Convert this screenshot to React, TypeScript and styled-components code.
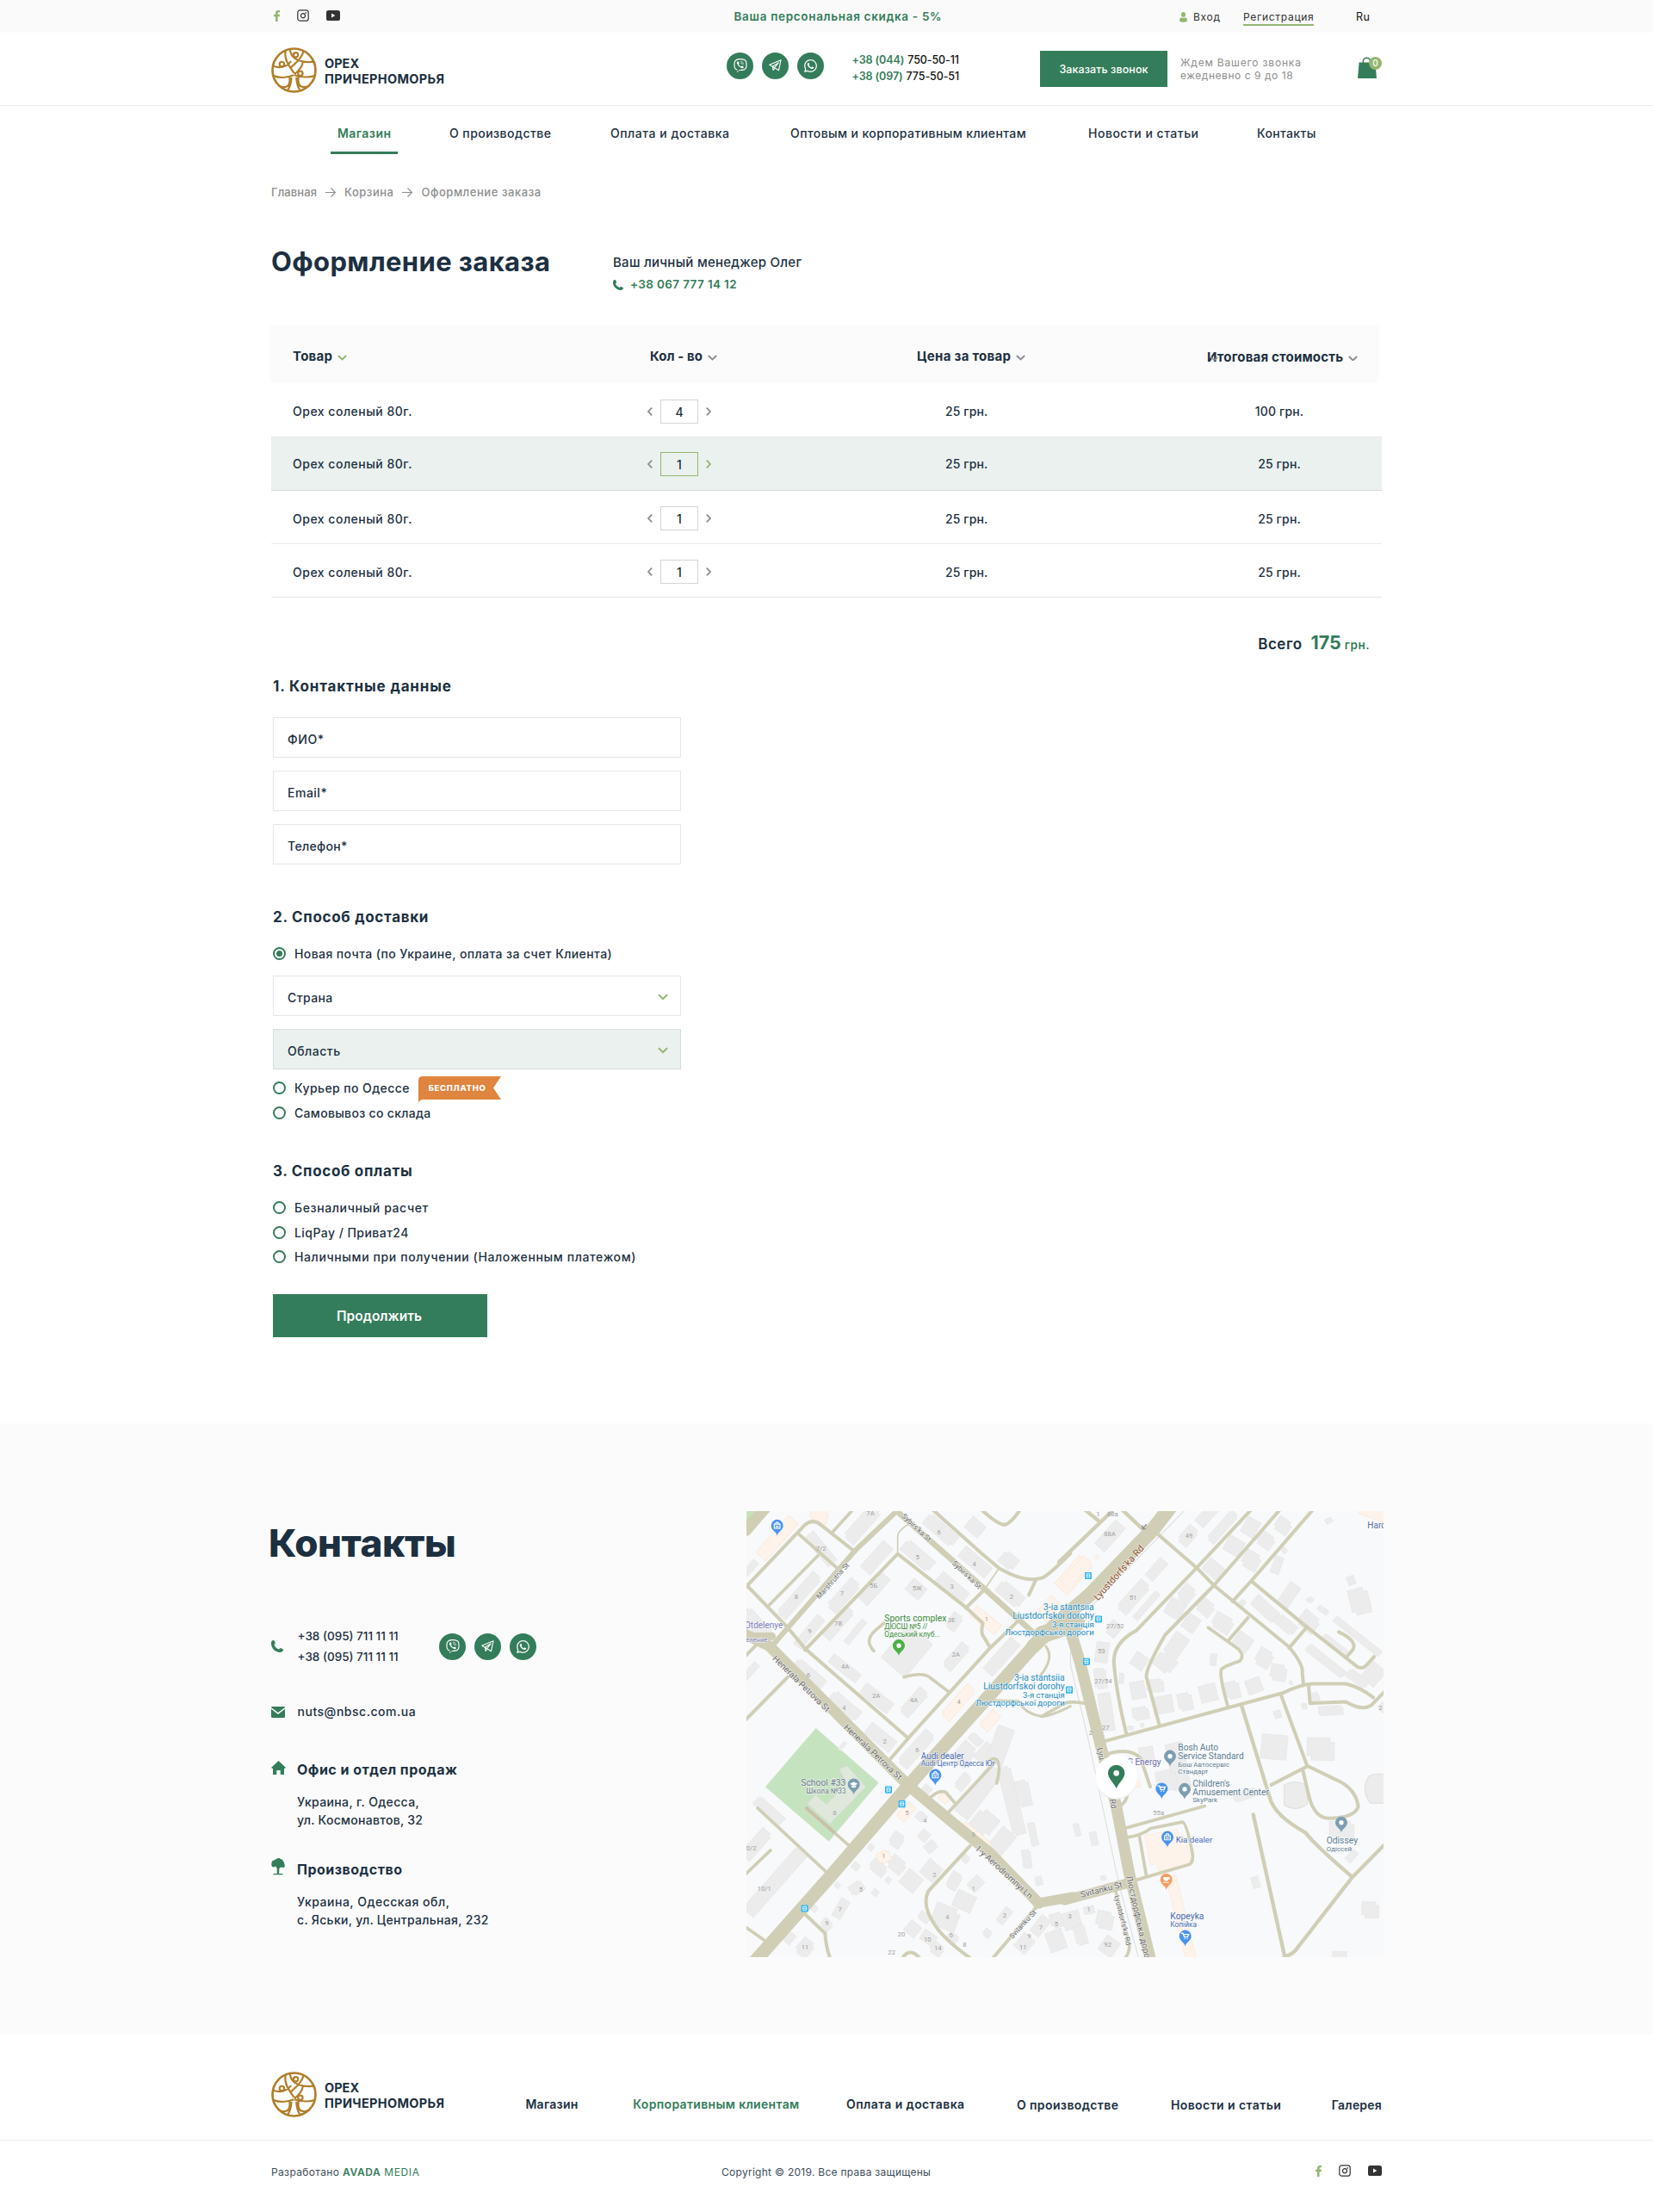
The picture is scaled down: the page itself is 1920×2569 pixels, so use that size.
import React from 'react';
import styled, { createGlobalStyle, css } from 'styled-components';
import { FaViber, FaWhatsapp } from 'react-icons/fa';

const green = '#347d5a';
const lime = '#94b670';
const ink = '#1c3041';
const grey = '#8e8e8e';

const GlobalStyle = createGlobalStyle`
  * { box-sizing: border-box; }
  body { margin: 0; background: #fff; color: ${ink}; font-family: Inter, "Open Sans", sans-serif; }
  h1, h2, h3, p { margin: 0; }
  svg { display: block; flex: none; }
`;

type Tracked = { $track?: number };
const tracking = css<Tracked>`
  letter-spacing: ${(p) => p.$track ?? 0}px;
  white-space: nowrap;
`;

const Page = styled.div`
  width: 1920px;
  height: 2569px;
  overflow: hidden;
`;
const Container = styled.div`
  width: 1290px;
  margin: 0 auto;
`;

/* ---------- top bar ---------- */
const TopBar = styled.div`
  height: 38px;
  background: #fafafa;
`;
const TopBarInner = styled(Container)`
  display: grid;
  grid-template-columns: 537.5px 517.5px 74px 131px auto;
`;
const Socials = styled.div<{ $top: number; $left: number }>`
  display: flex;
  align-items: center;
  height: 14px;
  margin-top: ${(p) => p.$top}px;
  margin-left: ${(p) => p.$left}px;
  gap: 20px;
`;
const Discount = styled.p<Tracked>`
  ${tracking}
  color: ${green};
  font-size: 13.5px;
  font-weight: 600;
  line-height: 39px;
`;
const Login = styled.a<Tracked>`
  ${tracking}
  display: flex;
  align-items: center;
  gap: 7px;
  height: 39px;
  font-size: 12px;
  color: #333;
`;
const Register = styled.a<Tracked>`
  ${tracking}
  justify-self: start;
  align-self: start;
  margin-top: 12px;
  font-size: 12px;
  line-height: 16px;
  color: #333;
  border-bottom: 2px solid ${lime};
`;
const Language = styled.span<Tracked>`
  ${tracking}
  font-size: 12.5px;
  font-weight: 400;
  line-height: 39px;
  color: #111;
`;

/* ---------- header ---------- */
const Header = styled.header`
  height: 85px;
  border-bottom: 1px solid #ececec;
`;
const HeaderInner = styled(Container)`
  display: grid;
  grid-template-columns: 529px 145.5px 218.5px 163px 206px auto;
  align-items: center;
  height: 84px;
`;
const LogoBox = styled.a`
  display: flex;
  align-items: center;
  gap: 9px;
  margin-top: 3px;
`;
const LogoText = styled.div`
  padding-top: 3px;
  font-size: 14.5px;
  font-weight: 700;
  line-height: 18.5px;
`;
const LogoLine = styled.div<Tracked>`
  ${tracking}
`;
const Messengers = styled.div<{ $lift?: number }>`
  display: flex;
  gap: 10px;
  margin-bottom: ${(p) => p.$lift ?? 0}px;
`;
const RoundButton = styled.button`
  display: flex;
  align-items: center;
  justify-content: center;
  width: 31px;
  height: 31px;
  padding: 0;
  border: 0;
  border-radius: 50%;
  background: ${green};
  color: #fff;
`;
const Phones = styled.div`
  margin-bottom: 2px;
  font-size: 12.5px;
  font-weight: 500;
  line-height: 19px;
  color: #111;
`;
const PhoneLine = styled.div`
  display: flex;
  gap: 4px;
  white-space: nowrap;
  letter-spacing: -0.1px;
`;
const PhoneCode = styled.span`
  color: ${green};
  font-weight: 600;
`;
const CallButton = styled.button<Tracked>`
  ${tracking}
  width: 148px;
  height: 42px;
  padding: 0;
  border: 0;
  background: ${green};
  color: #fff;
  font: 500 12.5px Inter, sans-serif;
`;
const Hours = styled.div`
  font-size: 12px;
  line-height: 15px;
  color: ${grey};
`;
const HoursLine = styled.div<Tracked>`
  ${tracking}
`;
const CartButton = styled.a`
  position: relative;
  width: 22px;
  height: 25px;
  margin-bottom: 4px;
`;
const CartBadge = styled.span`
  position: absolute;
  left: 13px;
  top: 0;
  width: 15px;
  height: 15px;
  border-radius: 50%;
  background: ${lime};
  color: #fff;
  font-size: 10px;
  font-weight: 500;
  line-height: 15px;
  text-align: center;
`;

/* ---------- navigation ---------- */
const MainNav = styled.nav`
  display: flex;
  padding-left: 69px;
`;
const NavLink = styled.a<Tracked & { $active?: boolean; $gap: number }>`
  ${tracking}
  margin-left: ${(p) => p.$gap}px;
  padding: 22px 8px 11px;
  border-bottom: 3px solid ${(p) => (p.$active ? green : 'transparent')};
  color: ${(p) => (p.$active ? green : ink)};
  font-size: 14px;
  font-weight: ${(p) => (p.$active ? 600 : 500)};
  line-height: 20px;
`;
const Breadcrumbs = styled.div`
  display: flex;
  align-items: center;
  gap: 10px;
  margin-top: 34px;
  height: 20px;
  color: ${grey};
  font-size: 13px;
  font-weight: 500;
`;
const Crumb = styled.span<Tracked>`
  ${tracking}
`;

/* ---------- title ---------- */
const TitleRow = styled.div`
  display: grid;
  grid-template-columns: 397px auto;
  height: 60px;
  margin-top: 50px;
`;
const PageTitle = styled.h1<Tracked>`
  ${tracking}
  padding-top: 1px;
  font-size: 31px;
  font-weight: 700;
  line-height: 40px;
`;
const Manager = styled.div`
  padding-top: 9px;
  line-height: 25px;
`;
const ManagerName = styled.p<Tracked>`
  ${tracking}
  font-size: 15px;
  font-weight: 500;
`;
const ManagerPhone = styled.p<Tracked>`
  ${tracking}
  display: flex;
  align-items: center;
  gap: 8px;
  margin-top: 1px;
  font-size: 13.5px;
  font-weight: 600;
  color: ${green};
`;

/* ---------- order table ---------- */
const TableHead = styled.div`
  display: grid;
  grid-template-columns: 415px 310px 337px auto;
  align-items: center;
  width: 1289px;
  height: 68px;
  margin: 34px 0 0 -2px;
  padding: 5px 0 0 27px;
  border-radius: 4px;
  background: #fbfbfb;
`;
const HeadCell = styled.div<Tracked & { $drop?: number }>`
  ${tracking}
  position: relative;
  display: flex;
  align-items: center;
  gap: 6px;
  padding-top: ${(p) => p.$drop ?? 0}px;
  font-size: 15px;
  font-weight: 700;
`;
const StrayMark = styled.span`
  position: absolute;
  left: 4px;
  top: 10px;
`;
const SortMark = styled.span`
  padding-top: 4px;
`;
const Row = styled.div<{ $active?: boolean; $height: number }>`
  display: grid;
  grid-template-columns: 412px 346px 358px 60px;
  align-items: center;
  height: ${(p) => p.$height}px;
  padding: ${(p) => (p.$active ? 0 : 3)}px 0 0 25px;
  border-bottom: 1px solid ${(p) => (p.$active ? '#d5dcd9' : '#e6e8e8')};
  background: ${(p) => (p.$active ? '#eaf1ee' : '#fff')};
  font-size: 14px;
  font-weight: 500;
`;
const Cell = styled.div<Tracked & { $center?: boolean }>`
  ${tracking}
  text-align: ${(p) => (p.$center ? 'center' : 'left')};
`;
const Quantity = styled.div`
  display: flex;
  align-items: center;
  gap: 9px;
`;
const QuantityBox = styled.div<{ $active?: boolean }>`
  width: 44px;
  height: 28px;
  border: 1px solid ${(p) => (p.$active ? lime : '#d5d5d5')};
  background: ${(p) => (p.$active ? 'transparent' : '#fff')};
  line-height: 27px;
  text-align: center;
`;
const Total = styled.div`
  display: flex;
  align-items: baseline;
  justify-content: flex-end;
  height: 24px;
  margin-top: 40px;
  padding-right: 14px;
  line-height: 24px;
  color: ${green};
`;
const TotalLabel = styled.span`
  margin-right: 10px;
  color: ${ink};
  font-size: 17px;
  font-weight: 600;
  letter-spacing: 0.5px;
`;
const TotalValue = styled.span`
  margin-right: 4px;
  font-size: 21.5px;
  font-weight: 700;
`;
const TotalUnit = styled.span`
  font-size: 13.5px;
  font-weight: 600;
  letter-spacing: 0.5px;
`;

/* ---------- form ---------- */
const Form = styled.form`
  width: 474px;
  margin: 29px 0 100px 2px;
`;
const StepTitle = styled.h3<Tracked & { $top?: number }>`
  ${tracking}
  margin-top: ${(p) => p.$top ?? 0}px;
  font-size: 17px;
  font-weight: 700;
  line-height: 20px;
`;
const FieldStack = styled.div<{ $top: number }>`
  display: flex;
  flex-direction: column;
  gap: 15px;
  margin-top: ${(p) => p.$top}px;
`;
const Field = styled.div<Tracked & { $active?: boolean }>`
  ${tracking}
  display: flex;
  align-items: center;
  justify-content: space-between;
  height: 47px;
  padding: 3px 14px 0 16px;
  border: 1px solid ${(p) => (p.$active ? '#d6dcd9' : '#e6e6e6')};
  background: ${(p) => (p.$active ? '#eaf1ee' : '#fff')};
  font-size: 14px;
  font-weight: 500;
`;
const Option = styled.label<Tracked & { $top: number }>`
  ${tracking}
  display: flex;
  align-items: center;
  height: 15px;
  margin-top: ${(p) => p.$top}px;
  font-size: 14px;
  font-weight: 500;
`;
const Radio = styled.span<{ $checked?: boolean }>`
  display: flex;
  align-items: center;
  justify-content: center;
  flex: none;
  width: 15px;
  height: 15px;
  margin-right: 10px;
  border: 2px solid ${green};
  border-radius: 50%;
  background: #fff;
  &::after {
    content: '';
    width: 7px;
    height: 7px;
    border-radius: 50%;
    background: ${(p) => (p.$checked ? green : 'transparent')};
  }
`;
const FreeTag = styled.span`
  position: relative;
  width: 96px;
  height: 27px;
  margin-left: 10px;
  padding-left: 12px;
  color: #fff;
  font-size: 9.5px;
  font-weight: 800;
  letter-spacing: 0.68px;
  line-height: 28px;
  & > svg { position: absolute; left: 0; top: 0; }
  & > b { position: relative; font-weight: inherit; }
`;
const Submit = styled.button`
  width: 249px;
  height: 50px;
  margin-top: 36px;
  padding: 0 2px 0 0;
  border: 0;
  background: ${green};
  color: #fff;
  font: 600 15.5px Inter, sans-serif;
`;

/* ---------- contacts ---------- */
const Contacts = styled.section`
  height: 710px;
  background: #fbfbfb;
`;
const ContactsInner = styled(Container)`
  display: grid;
  grid-template-columns: 552px 740px;
  align-items: start;
`;
const ContactsTitle = styled.h2`
  margin: 114px 0 0 -3px;
  font-size: 44px;
  font-weight: 800;
  letter-spacing: -0.45px;
  line-height: 50px;
`;
const ContactRow = styled.div<{ $top: number }>`
  display: grid;
  grid-template-columns: 30.5px 164.5px auto;
  align-items: center;
  margin-top: ${(p) => p.$top}px;
`;
const ContactPhones = styled.div`
  font-size: 13.5px;
  font-weight: 500;
  line-height: 24px;
`;
const ContactLine = styled.div<Tracked>`
  ${tracking}
  font-size: 14px;
  font-weight: 500;
  line-height: 20px;
`;
const PlaceHead = styled.div<{ $top: number }>`
  display: grid;
  grid-template-columns: 30px auto;
  align-items: start;
  height: 20px;
  margin-top: ${(p) => p.$top}px;
`;
const PlaceIcon = styled.span<{ $lift?: number }>`
  margin-top: ${(p) => -(p.$lift ?? 0)}px;
`;
const PlaceTitle = styled.h3`
  font-size: 16px;
  font-weight: 700;
  letter-spacing: 0.49px;
  line-height: 20px;
`;
const Address = styled.div`
  margin: 17px 0 0 30px;
  font-size: 14px;
  font-weight: 500;
  line-height: 21px;
`;
const AddressLine = styled.div<Tracked>`
  ${tracking}
`;
const MapFrame = styled.div`
  width: 740px;
  height: 518px;
  margin-top: 102px;
  overflow: hidden;
`;

/* ---------- footer ---------- */
const FooterTop = styled(Container)`
  display: flex;
  height: 122px;
  padding-top: 40px;
  align-items: flex-start;
`;
const FooterNav = styled.nav`
  display: flex;
  margin-left: auto;
  padding-top: 31px;
`;
const FooterLink = styled.a<Tracked & { $active?: boolean; $gap: number; $drop?: number }>`
  ${tracking}
  margin-left: ${(p) => p.$gap}px;
  padding-top: ${(p) => p.$drop ?? 0}px;
  color: ${(p) => (p.$active ? green : ink)};
  font-size: 14px;
  font-weight: 600;
  line-height: 20px;
`;
const FooterBottom = styled.div`
  border-top: 1px solid #e6e8e8;
`;
const FooterBottomInner = styled(Container)`
  display: grid;
  grid-template-columns: 523px 690px auto;
`;
const FinePrint = styled.div<Tracked>`
  ${tracking}
  margin-top: 26px;
  font-size: 12px;
  line-height: 21px;
  color: #3d4d5b;
`;
const Studio = styled.span`
  color: ${green};
  letter-spacing: 0.6px;
  & > b { font-weight: 600; }
`;

/* ---------- icons ---------- */
const Chevron = ({ color = grey, w = 11 }: { color?: string; w?: number }) => (
  <svg width={w} height={w * 0.62} viewBox="0 0 13 8" fill="none" stroke={color} strokeWidth="2.2">
    <path d="M1 1.2 6.5 6.5 12 1.2" />
  </svg>
);
const Step = ({ dir, color = grey }: { dir: 'l' | 'r'; color?: string }) => (
  <svg width="6" height="10" viewBox="0 0 6 10" fill="none" stroke={color} strokeWidth="1.8">
    <path d={dir === 'l' ? 'M5.2.6 1 5l4.2 4.4' : 'M.8.6 5 5 .8 9.4'} />
  </svg>
);
const ArrowIcon = () => (
  <svg width="12" height="12" viewBox="0 0 12 12" fill="none" stroke={grey} strokeWidth="1.2">
    <path d="M0 6.5h11M6.5 1.5l5 5-5 5" />
  </svg>
);
const PhoneIcon = ({ size }: { size: number }) => (
  <svg width={size} height={size} viewBox="0 0 14 14" fill={green}>
    <path d="M1 .6C1.900-.1 3-.1 3.600.6 4.300 1.500 4.700 2.600 4.700 3.600c0 .7-.9 1-1.300 1.500C4.200 7.800 6.400 9.900 9.100 10.500c.5-.5.8-1.200 1.500-1.200 1.100 0 2.200.5 3 1.200.6.6.5 1.500-.1 2.100-.9 1-2.100 1.400-3.300 1.400C4.400 13.600.3 9.300 0 3.900 0 2.600.2 1.400 1 .6z" />
  </svg>
);
const FacebookIcon = () => (
  <svg width="7" height="13" viewBox="0 0 7 13" fill={lime}>
    <path d="M2 13V7.200H0V4.800h2V3.200C2 1.100 3.200 0 5 0h2v2.300H5.700c-.8 0-1.100.4-1.100 1.200v1.300H7L6.700 7.200H4.600V13z" />
  </svg>
);
const InstagramIcon = () => (
  <svg width="14" height="14" viewBox="0 0 14 14" fill="none" stroke="#333" strokeWidth="1.2">
    <rect x=".8" y=".8" width="12.400" height="12.400" rx="2.800" />
    <circle cx="7" cy="7.200" r="2.500" />
    <circle cx="10.300" cy="3.800" r=".3" />
  </svg>
);
const YoutubeIcon = () => (
  <svg width="16" height="12" viewBox="0 0 16 12">
    <rect width="16" height="12" rx="2.600" fill="#333" />
    <path d="M6 3.600v4.800L10.400 6z" fill="#fff" />
  </svg>
);
const UserIcon = () => (
  <svg width="9" height="12" viewBox="0 0 9 12" fill={lime}>
    <ellipse cx="4.500" cy="3" rx="2.500" ry="3" />
    <path d="M1.800 6.300C3 7.200 6 7.200 7.200 6.300 8.400 7 9 8.300 9 10c0 2.400-9 2.400-9 0 0-1.700.6-3 1.800-3.700z" />
  </svg>
);
const PlaneIcon = () => (
  <svg width="15" height="14" viewBox="0 0 16 15" fill="none" stroke="#fff" strokeWidth="1.200" strokeLinejoin="round">
    <path d="M15 .8.800 6.800 4.600 8.800 12.300 13.600zM4.600 8.800 12 4.200 7.200 10.200M4.600 8.800 5.400 13.200 7.400 10.800" />
  </svg>
);
const BagIcon = () => (
  <svg width="22" height="25" viewBox="0 0 22 25">
    <path d="M1.600 6.500h18.800L22 25H0z" fill={green} />
    <path d="M6.200 9V6C6.200-.4 14.800-.4 14.800 6v3" fill="none" stroke={green} strokeWidth="1.500" />
  </svg>
);
const MailIcon = () => (
  <svg width="16" height="13" viewBox="0 0 16 13" fill={green}>
    <path d="M1.200 0h13.600c.7 0 1.200.5 1.200 1L8 7 0 1c0-.5.5-1 1.200-1zM0 2.800 8 9l8-6.200v9c0 .7-.5 1.200-1.200 1.200H1.200C.5 13 0 12.500 0 11.800z" />
  </svg>
);
const HomeIcon = () => (
  <svg width="17" height="16" viewBox="0 0 17 16" fill={green}>
    <path d="M8.500 0 17 8l-1 .8h-1V16h-4.300v-5H6.300v5H2V8.800H1L0 8z" />
  </svg>
);
const TreeIcon = () => (
  <svg width="16" height="20" viewBox="0 0 16 20" fill={green}>
    <path d="M6 1.200C7.600-.6 10-.2 10.800 1.200c1.800-.2 3 1 3 2.600 1.300.7 1.500 2 1.400 3 1.200 1.700.6 4-1.200 4.200-1.200.2-2-.3-2.400-.8L9.400 12l-.3 6h4.400v1.200h-11V18h4.400l-.2-6-1.600-2.400C4 10.500 2 11 .9 9.400 0 8 .2 6.700.5 5.800.6 3.500 2 2.400 3.700 2.600 4.200 1.700 5 1.200 6 1.200z" />
  </svg>
);
const Emblem = () => (
  <svg width="53" height="53" viewBox="14 168 158 158" fill="none" stroke="#b07f2b" strokeWidth="6.500">
    <circle cx="93" cy="247" r="74.500" strokeWidth="8" />
    <path d="M63 178c-3 30 6 46 31 80M79 177c3 18 12 29 27 34M126 179c-2 14-10 26-22 38l-21 20M103 212c20 6 42 9 61 5M21 233c24 8 46 3 62-17M124 217c-2 18-14 32-29 44M20 266c24 9 49 8 72-2M94 264c24 8 50 9 73 2M78 270c2 26-5 34-14 35-10 1-18-1-24-4M108 270c-2 26 5 34 14 35 10 1 18-1 24-4M84 272c-1 16-3 30-12 44M101 272c1 16 3 30 12 44" />
    <circle cx="99" cy="194" r="8" />
    <circle cx="51" cy="226" r="8" />
    <circle cx="115" cy="258" r="8" />
  </svg>
);

const Logo = () => (
  <LogoBox>
    <Emblem />
    <LogoText>
      <LogoLine>ОРЕХ</LogoLine>
      <LogoLine $track={0.34}>ПРИЧЕРНОМОРЬЯ</LogoLine>
    </LogoText>
  </LogoBox>
);
const MessengerButtons = ({ lift }: { lift?: number }) => (
  <Messengers $lift={lift}>
    <RoundButton><FaViber size={16} /></RoundButton>
    <RoundButton><PlaneIcon /></RoundButton>
    <RoundButton><FaWhatsapp size={17} /></RoundButton>
  </Messengers>
);
const SocialIcons = ({ top, left }: { top: number; left: number }) => (
  <Socials $top={top} $left={left}>
    <FacebookIcon />
    <InstagramIcon />
    <YoutubeIcon />
  </Socials>
);

/* ---------- map ---------- */
type Road = [d: string, width: number];
const roadsWest: Road[] = [
  ['M20 80 90 0', 40],
  ['M25 1590 320 1262 588 955 1030 470', 46],
  ['M0 430 100 478 340 715 588 960 740 1085 870 1190 1040 1362', 38],
  ['M0 445H110', 26],
  ['M1035 1362 1160 1340', 34],
  ['M100 490 400 150 550 10', 18],
  ['M15 280 225 62Q252 40 280 62L400 155', 12],
  ['M20 268 165 415 225 487 585 795', 12],
  ['M225 492 548 162 785 345 845 400Q835 435 850 450L870 483', 12],
  ['M515 875 585 795 870 485 975 385', 12],
  ['M545 15 860 290 1040 450', 20],
  ['M670 10 840 160 900 210Q990 262 1050 245 1075 235 1150 160', 12],
  ['M1005 303 1030 250', 12],
  ['M785 348 850 285', 12],
  ['M850 285 902 210M548 160V100Q550 80 590 58', 5],
  ['M840 10Q895 60 920 62 940 60 975 10', 12],
  ['M320 88 392 10M205 95 350 222M100 338 270 168', 11],
  ['M15 735 165 585M10 520 60 470', 12],
  ['M465 495Q430 460 470 425L500 400M570 585Q640 565 665 590L725 635', 11],
  ['M1065 480Q1095 520 1045 580', 9],
  ['M880 665 970 668Q990 710 1050 720 1080 720 1150 685', 9],
  ['M720 1055 885 880M860 880Q875 860 892 868 910 885 893 950M655 1005Q690 970 715 980L745 1015', 11],
  ['M800 1165 655 1320Q630 1370 680 1440 710 1485 800 1550', 12],
  ['M1040 1365 880 1550', 12],
  ['M230 1035 380 1165M60 1035 300 1255M15 1265 105 1180M20 1445 85 1490', 11],
  ['M220 1395 295 1465Q298 1510 312 1550M565 1550Q590 1512 625 1550', 12],
];
const roadsEast: Road[] = [
  ['M-90 480 10 385 110 300 330 75 385 5', 50],
  ['M-60 440 60 400', 60],
  ['M35 410 75 540 130 760 200 1030 245 1260 320 1560', 40],
  ['M20 1352 250 1290', 34],
  ['M0 190 185 15M90 10 140 50M220 10 290 75', 13],
  ['M340 90 480 210 540 270 800 480Q852 540 848 570L852 610', 12],
  ['M670 10 480 210 270 425Q185 470 192 540 200 640 235 780', 12],
  ['M770 10 540 270 370 440Q300 560 305 585L350 750', 12],
  ['M885 10 670 255 605 325', 12],
  ['M670 255 860 410 1040 550Q1060 560 1075 540L1098 515M865 412 802 485M658 382 590 460', 12],
  ['M520 415 620 485Q650 510 630 530 570 550 565 560 560 590 590 690', 11],
  ['M160 805 590 690 780 640Q850 605 900 608H1000Q1050 620 1095 655', 12],
  ['M870 615 875 675 1000 670Q1070 710 1100 670L1145 625', 12],
  ['M975 430Q1040 460 1025 490L1000 518', 12],
  ['M637 685 735 1000Q750 1060 860 1120 890 1160 1020 1270', 13],
  ['M775 650 865 890 960 935Q1035 965 1043 1030 1030 1070 940 1070 890 1070 870 990L850 905M740 955 865 892', 12],
  ['M1145 1150 1020 1275 835 1510Q820 1535 790 1545M677 1057 790 1560', 13],
  ['M165 850Q250 825 285 865L318 962', 12],
  ['M235 1103 508 1028M242 1135Q285 1130 320 1105L430 1083Q445 1085 465 1190 470 1225 450 1230L270 1282M280 1130 305 1270', 11],
  ['M210 1028Q240 1015 240 970M-60 720 20 675Q45 668 88 675', 11],
  ['M195 1310 245 1500Q248 1540 220 1560', 11],
];
type Block = [cx: number, cy: number, w: number, h: number, angle: number];
const blocksWest: Block[] = [
  [280, 145, 40, 130, -40], [205, 305, 42, 190, 42], [240, 430, 34, 130, 40], [425, 60, 50, 150, 42],
  [475, 175, 46, 120, 42], [360, 305, 46, 130, 42], [465, 280, 48, 120, 42], [340, 400, 40, 130, 42],
  [400, 430, 22, 100, 40], [698, 80, 48, 130, -50], [818, 190, 46, 120, -50], [618, 168, 48, 125, -50],
  [738, 278, 48, 120, -50], [940, 300, 50, 100, -50], [818, 70, 50, 60, -50], [935, 185, 50, 60, -50],
  [612, 283, 60, 50, 40], [745, 395, 40, 60, 35], [580, 495, 110, 150, 40], [752, 515, 40, 105, 42],
  [910, 515, 45, 145, 42], [240, 575, 44, 125, -50], [363, 555, 36, 120, -52], [363, 685, 46, 120, -50],
  [475, 658, 44, 120, -52], [605, 672, 42, 110, 42], [488, 792, 48, 110, -52], [613, 832, 46, 150, 42],
  [355, 822, 12, 34, 40], [100, 1045, 38, 120, -48], [120, 1290, 50, 280, 42], [55, 1160, 44, 120, 42],
  [35, 210, 24, 60, 42], [60, 410, 50, 140, -42], [35, 565, 24, 70, 42], [780, 850, 60, 80, 42],
  [850, 845, 40, 70, 42], [820, 800, 30, 50, -48], [905, 820, 60, 130, 20], [945, 1010, 46, 240, -14],
  [830, 980, 60, 200, 38], [850, 1085, 80, 80, -50], [910, 1150, 60, 90, 40], [985, 985, 50, 90, -12],
  [1020, 1125, 24, 80, -12], [998, 1210, 30, 64, -8], [1040, 1285, 24, 30, -14], [775, 945, 36, 60, 40],
  [650, 970, 30, 26, 40], [545, 1145, 44, 50, 35], [640, 1130, 34, 36, 40], [630, 1065, 30, 36, -50],
  [663, 1168, 40, 34, -40], [545, 1230, 60, 50, 40], [595, 1285, 64, 60, 40], [480, 1240, 60, 40, 40],
  [665, 1250, 60, 60, 40], [745, 1285, 40, 60, 30], [820, 1295, 50, 40, -45], [715, 1410, 90, 80, 20],
  [780, 1355, 70, 60, 25], [640, 1410, 40, 30, 35], [600, 1450, 46, 46, 40], [405, 1310, 50, 40, -35],
  [402, 1235, 26, 24, 40], [455, 1170, 20, 22, 40], [350, 1380, 34, 70, 30], [300, 1435, 40, 34, 45],
  [172, 1482, 28, 40, 40], [225, 1515, 50, 60, 40], [920, 1405, 30, 60, 38], [860, 1465, 28, 28, 40],
  [655, 1480, 50, 40, 35], [685, 1520, 44, 40, 40], [1045, 1440, 40, 70, 40], [1105, 1420, 50, 50, -15],
  [990, 1500, 50, 60, 40], [785, 1210, 26, 26, 40], [470, 1325, 22, 22, 40], [515, 1283, 20, 20, 40],
  [1100, 1490, 60, 70, -20], [740, 1480, 40, 30, 40], [338, 1300, 18, 18, 40], [258, 1380, 22, 22, 40],
];
const blocksEast: Block[] = [
  [178, 100, 46, 110, 42], [450, 100, 44, 70, 42], [515, 30, 40, 80, 42], [570, 70, 34, 130, 42],
  [668, 70, 50, 60, 30], [780, 65, 56, 50, 35], [610, 135, 60, 56, 30], [720, 115, 60, 50, 35],
  [340, 215, 36, 80, 42], [260, 310, 46, 130, 42], [305, 340, 22, 120, 42], [190, 420, 44, 50, 40],
  [150, 500, 44, 70, 8], [145, 590, 42, 70, -6], [165, 705, 44, 130, -8], [445, 300, 50, 60, 40],
  [405, 350, 60, 60, 30], [510, 345, 60, 50, 40], [460, 400, 50, 56, 35], [570, 400, 70, 56, 30],
  [540, 215, 70, 50, 40], [670, 185, 60, 60, 30], [718, 350, 44, 100, -48], [790, 405, 40, 80, -50],
  [800, 305, 44, 90, 35], [870, 395, 70, 60, 40], [640, 465, 60, 56, 35], [715, 520, 56, 60, 30],
  [410, 475, 56, 80, 35], [370, 535, 60, 70, -50], [280, 530, 50, 50, 35], [765, 570, 56, 56, 10],
  [275, 630, 50, 60, -10], [335, 615, 60, 44, -5], [362, 680, 70, 60, -10], [440, 670, 50, 60, -12],
  [520, 640, 60, 60, -14], [605, 630, 50, 60, -14], [680, 615, 54, 50, -20], [285, 710, 56, 44, -10],
  [760, 200, 30, 60, 20], [1048, 325, 68, 90, -14], [1018, 253, 26, 30, -20], [960, 475, 26, 100, -52],
  [1040, 445, 24, 200, -52], [930, 530, 30, 160, -52], [1095, 575, 60, 70, 40], [1040, 590, 34, 80, -55],
  [890, 658, 34, 36, -20], [947, 700, 86, 32, -3], [750, 825, 90, 84, 5], [912, 832, 96, 78, 1],
  [415, 890, 60, 160, -12], [375, 940, 70, 70, -12],
  [305, 850, 50, 50, -8], [985, 1110, 86, 60, 0], [1020, 1200, 26, 44, 42], [650, 990, 84, 30, -18],
  [685, 1290, 26, 40, -16], [1085, 1385, 60, 56, 1], [978, 1538, 50, 22, 0], [63, 1110, 20, 44, -12],
  [122, 1140, 24, 46, -12], [155, 1275, 18, 16, -12], [45, 1420, 60, 60, -15], [160, 1420, 60, 60, 10],
  [175, 1510, 56, 60, 35], [75, 1470, 40, 70, -15], [105, 1385, 36, 26, -12], [855, 685, 18, 20, -12],
  [762, 713, 24, 26, -15], [808, 605, 12, 14, 0], [538, 525, 22, 40, 5], [218, 590, 16, 36, 5],
  [640, 330, 20, 20, 40], [940, 48, 24, 18, -30], [785, 150, 16, 20, -40], [875, 320, 20, 20, -40],
  [920, 355, 40, 18, 35], [250, 760, 20, 14, 0], [290, 750, 12, 14, 0], [1130, 690, 30, 30, 40],
];
const shopsWest: Block[] = [
  [128, 108, 44, 170, 42], [275, 30, 60, 50, 20], [855, 390, 40, 110, -52], [760, 672, 40, 140, 42],
  [870, 735, 38, 70, 42], [822, 1128, 26, 120, -50], [578, 1048, 36, 64, 42], [500, 1203, 44, 40, -30],
  [712, 998, 34, 34, 40], [1075, 350, 50, 80, 42], [1160, 235, 60, 130, 42],
];
const shopsEast: Block[] = [
  [60, 225, 40, 120, 42], [380, 1180, 140, 130, -10], [430, 1430, 36, 330, -14], [262, 950, 40, 30, -10],
  [1110, 20, 120, 50, 20], [132, 173, 14, 14, 40],
];
type Label = [text: string, x: number, y: number, size: number, color: string, anchor?: 'middle' | 'end', angle?: number];
const street = '#6b6b6b';
const metro = '#1d8fc4';
const poi = '#5f7f92';
const shop = '#4a6cb5';
const labelsWest: Label[] = [
  ['Sports complex', 502, 395, 31, '#3c8f3a'], ['ДЮСШ №5 //', 502, 421, 25, '#3c8f3a'], ['Одеський клуб...', 502, 446, 25, '#3c8f3a'],
  ['Otdelenye', 15, 416, 30, '#7d7fb8'], ['деление', 4, 465, 23, '#7d7fb8'],
  ['School #33', 211, 959, 31, '#647683'], ['Школа №33', 368, 985, 25, '#647683', 'end'],
  ['Audi dealer', 629, 866, 30, shop], ['Audi Центр Одесса Юг', 629, 890, 25, shop],
  ['3-ia stantsiia', 1232, 354, 31, metro, 'end'], ['Liustdorfskoi dorohy', 1232, 385, 31, metro, 'end'],
  ['3-я станція', 1232, 413, 28.5, metro, 'end'], ['Люстдорфської дороги', 1232, 441, 28.5, metro, 'end'],
  ['3-ia stantsiia', 1130, 597, 31, metro, 'end'], ['Liustdorfskoi dorohy', 1130, 628, 31, metro, 'end'],
  ['3-я станція', 1130, 656, 28.5, metro, 'end'], ['Люстдорфської дороги', 1130, 684, 28.5, metro, 'end'],
  ['Marshrutna St', 328, 260, 25, street, 'middle', -48], ["Sybirs'ka St", 608, 78, 25, street, 'middle', 43],
  ["Sybirs'ka St", 783, 240, 25, street, 'middle', 43], ['Henerala Petrova St', 205, 615, 30, street, 'middle', 44],
  ['Henerala Petrova St', 455, 850, 30, street, 'middle', 43], ['1-y Aerodromnyi Ln', 912, 1262, 30, street, 'middle', 42],
  ['Svitanku St', 990, 1440, 25, street, 'middle', -47],
];
const labelsEast: Label[] = [
  ["Lyustdorfs'ka Rd", 217, 234, 33, '#92542b', 'middle', -48], ['Lyu', 137, 850, 28, street, 'middle', 78],
  ['Rd', 180, 1022, 28, street, 'middle', 80], ['Svitanku St', 150, 1325, 30, street, 'middle', -14],
  ["Lyustdorfs'ka Rd", 214, 1422, 24, street, 'middle', 76], ['Люстдорфська дорога', 270, 1425, 30, street, 'middle', 77],
  ['Harc', 1075, 75, 30, '#5a6fa5'], ['S Energy', 240, 886, 30, '#7072b0'],
  ['Bosh Auto', 415, 838, 30.5, poi], ['Service Standard', 415, 868, 30.5, poi], ['Бош Автосервіс', 415, 894, 24, poi], ['Стандарт', 415, 918, 24, poi],
  ["Children's", 466, 962, 30.5, poi], ['Amusement Center', 466, 992, 31, poi], ['SkyPark', 466, 1016, 24, poi],
  ['Kia dealer', 407, 1154, 29, shop], ['Odissey', 932, 1157, 31, poi], ['Одіссей', 932, 1183, 24, poi],
  ['Kopeyka', 388, 1417, 31, shop], ['Копійка', 388, 1443, 25, shop],
];
type Num = [text: string, x: number, y: number];
const numbersWest: Num[] = [
  ['7A', 453, 30], ['7/2', 281, 150], ['8', 195, 317], ['7', 354, 305], ['5Б', 464, 278], ['9', 241, 434], ['7В', 341, 408],
  ['6', 692, 94], ['4', 815, 204], ['5', 617, 182], ['3', 737, 282], ['5Ж', 616, 288], ['2', 945, 317], ['3Е', 736, 397],
  ['1', 858, 395], ['2A', 751, 514], ['6', 237, 585], ['4A', 365, 556], ['4', 361, 697], ['2A', 473, 656], ['4A', 604, 671],
  ['4', 761, 678], ['2', 503, 813], ['6', 616, 843], ['8', 328, 1058], ['5', 580, 1060], ['4', 643, 1086], ['3', 812, 1132],
  ['0/2', 38, 1180], ['1', 499, 1208], ['2', 676, 1273], ['5', 420, 1322], ['1', 812, 1318], ['10/1', 83, 1320],
  ['7', 347, 1390], ['9', 301, 1437], ['4', 721, 1418], ['2', 921, 1412], ['20', 561, 1476], ['10', 652, 1494], ['6', 735, 1480],
  ['14', 688, 1522], ['8', 781, 1513], ['22', 527, 1539], ['11', 225, 1521], ['11', 985, 1521], ['7', 1047, 1453], ['5', 1101, 1440], ['9', 1006, 1483],
];
const numbersEast: Num[] = [
  ['1', 136, 33], ['88a', 187, 33], ['88A', 177, 102], ['49', 453, 106], ['51', 258, 319], ['27/52', 196, 417], ['53', 148, 504],
  ['27/54', 154, 607], ['27', 163, 767], ['2', 111, 784], ['55a', 347, 1058], ['3', 38, 1414], ['1', 104, 1390], ['92', 170, 1511], ['2', 1120, 699],
];
type PinSpec = [x: number, y: number, color: string, glyph: 'bag' | 'dot' | 'cap' | 'cart' | 'cup'];
const pinsWest: PinSpec[] = [[128, 65, '#4a94f0', 'bag'], [552, 477, '#4caf47', 'dot'], [395, 954, '#7d9db1', 'cap'], [679, 922, '#4a94f0', 'bag']];
const pinsEast: PinSpec[] = [
  [387, 857, '#7d9db1', 'dot'], [438, 970, '#7d9db1', 'dot'], [358, 969, '#4a94f0', 'cart'], [378, 1135, '#4a94f0', 'bag'],
  [374, 1281, '#f79a62', 'cup'], [440, 1475, '#4a94f0', 'cart'], [984, 1085, '#7d9db1', 'dot'],
];

const Roads = ({ items }: { items: Road[] }) => (
  <g fill="none" stroke="#d0cfb6" strokeLinecap="round" strokeLinejoin="round">
    {items.map(([d, w], i) => <path key={i} d={d} strokeWidth={w} />)}
  </g>
);
const Blocks = ({ items, fill = '#ececec', line = '#e3e3e3' }: { items: Block[]; fill?: string; line?: string }) => (
  <g fill={fill} stroke={line} strokeWidth="1.5">
    {items.map(([x, y, w, h, a], i) => {
      const n = Math.min(w, h) * 0.2;
      /* corners are notched on alternate blocks so that outlines stay irregular */
      const d = i % 2
        ? `M${-w / 2} ${-h / 2}H${w / 2 - n}V${-h / 2 + n}H${w / 2}V${h / 2}H${-w / 2 + n}V${h / 2 - n}H${-w / 2}Z`
        : `M${-w / 2} ${-h / 2}H${w / 2}V${h / 2}H${-w / 2}Z`;
      return <path key={i} d={d} transform={`translate(${x} ${y}) rotate(${a})`} />;
    })}
  </g>
);
const Labels = ({ items }: { items: Label[] }) => (
  <g fontFamily="Roboto, sans-serif" stroke="#f8f9fb" strokeWidth="4" strokeOpacity=".75" paintOrder="stroke">
    {items.map(([t, x, y, s, c, anchor, a], i) => (
      <text key={i} fontSize={s} fill={c} textAnchor={anchor} transform={`translate(${x} ${y}) rotate(${a ?? 0})`}>{t}</text>
    ))}
  </g>
);
const Numbers = ({ items }: { items: Num[] }) => (
  <g fontFamily="Roboto, sans-serif" fontSize="23" fill="#a0a0a0" textAnchor="middle">
    {items.map(([t, x, y], i) => <text key={i} x={x} y={y}>{t}</text>)}
  </g>
);
const glyphs = {
  bag: <path d="M-10-5H10V9H-10ZM-5-6C-5-14 5-14 5-6M-5 1Q0 6 5 1" fill="none" stroke="#fff" strokeWidth="3.5" />,
  dot: <circle r="8" fill="#fff" />,
  cap: <path d="M-14-2 0-9 14-2 0 5ZM-8 3V9Q0 13 8 9V3L0 7Z" fill="#fff" />,
  cart: <path d="M-13-10H-8L-3 3H8L12-6H-7M-2 9h.1M7 9h.1" fill="none" stroke="#fff" strokeWidth="4" strokeLinecap="round" />,
  cup: <path d="M-10-9H12V-1H7Q7 5 0 5T-10-2ZM-11 8H9V11H-11Z" fill="#fff" />,
};
const Pins = ({ items }: { items: PinSpec[] }) => (
  <g>
    {items.map(([x, y, c, g], i) => (
      <g key={i} transform={`translate(${x} ${y})`}>
        <path d="M0 35C-3 20-21 15-21 0A21 21 0 0 1 21 0C21 15 3 20 0 35Z" fill={c} />
        {glyphs[g]}
      </g>
    ))}
  </g>
);
const Stops = ({ items }: { items: [number, number][] }) => (
  <g>
    {items.map(([x, y], i) => (
      <g key={i} transform={`translate(${x} ${y})`}>
        <rect x="-12" y="-12" width="24" height="24" rx="3" fill="#2bb5f5" />
        <path d="M-6-7H6V5H-6ZM-6-1H6M-5 8h2M3 8h2" fill="none" stroke="#fff" strokeWidth="2.5" />
      </g>
    ))}
  </g>
);
const CityMap = () => (
  <svg width="740" height="518" viewBox="0 0 2220 1532" preserveAspectRatio="none">
    <rect width="2220" height="1532" fill="#f8f9fb" />
    <g transform="translate(-21 -15)">
      <path d="M263 760 482 948 308 1150 87 962Z" fill="#c6e3c0" />
      <path d="M20 15H85L20 75Z" fill="#c6e3c0" />
      <Blocks items={blocksWest} />
      <path d="M345 900 372 890 438 962 312 1090 233 1020 262 988 300 1022 370 950Z" fill="#dfe8db" stroke="#cfd9cb" strokeWidth="2" />
    </g>
    <g transform="translate(1089 -15)">
      <Blocks items={blocksEast} />
      <path d="M785 955Q825 935 866 958V1020Q830 1050 785 1025ZM1080 925Q1110 910 1145 925V1018H1085Q1050 970 1080 925Z" fill="#ececec" stroke="#dedede" strokeWidth="3" />
    </g>
    <g transform="translate(-21 -15)"><Blocks items={shopsWest} fill="#fdf3ea" line="#f9dcc2" /></g>
    <g transform="translate(1089 -15)"><Blocks items={shopsEast} fill="#fdf3ea" line="#f9e3d0" /></g>
    <g transform="translate(1089 -15)" fill="none" stroke="#dcdcdc" strokeWidth="3">
      <path d="M440 10 120 335 50 470Q35 500 42 550L100 790 210 1300 280 1560" />
    </g>
    <g transform="translate(-21 -15)"><Roads items={roadsWest} /></g>
    <g transform="translate(1089 -15)"><Roads items={roadsEast} /></g>
    <g transform="translate(-21 -15)">
      <path d="M230 1035 325 1117" stroke="#cbbfa8" strokeWidth="11" strokeLinecap="round" />
      <Numbers items={numbersWest} />
      <Labels items={labelsWest} />
      <Stops items={[[516, 972], [563, 1021], [224, 1380]]} />
      <Pins items={pinsWest} />
    </g>
    <g transform="translate(1089 -15)">
      <Numbers items={numbersEast} />
      <Labels items={labelsEast} />
      <path d="M305 60 293 74M291 64V76H303" fill="none" stroke="#8f8f8f" strokeWidth="4" />
      <Stops items={[[102, 237], [138, 386], [96, 532], [36, 629]]} />
      <Pins items={pinsEast} />
      <circle cx="200" cy="932" r="73" fill="#eff0f2" />
      <circle cx="200" cy="927" r="73" fill="#fff" />
      <path d="M200 968C192 948 171 935 171 915A29 28 0 0 1 229 915C229 935 208 948 200 968Z" fill={green} />
      <circle cx="200" cy="915" r="10" fill="#fff" />
    </g>
  </svg>
);

/* ---------- data ---------- */
const navItems = [
  { text: 'Магазин', track: 0.43, gap: 0, active: true },
  { text: 'О производстве', track: 0.47, gap: 51.5 },
  { text: 'Оплата и доставка', track: 0.53, gap: 52.5 },
  { text: 'Оптовым и корпоративным клиентам', track: 0.4, gap: 54.5 },
  { text: 'Новости и статьи', track: 0.49, gap: 56 },
  { text: 'Контакты', track: 0.35, gap: 51.5 },
];
const footerItems = [
  { text: 'Магазин', track: 0.26, gap: 0 },
  { text: 'Корпоративным клиентам', track: 0.33, gap: 63.5, active: true },
  { text: 'Оплата и доставка', track: 0.39, gap: 54.5 },
  { text: 'О производстве', track: 0.39, gap: 60.5, drop: 1 },
  { text: 'Новости и статьи', track: 0.42, gap: 60.5, drop: 1 },
  { text: 'Галерея', track: 0.21, gap: 58.5, drop: 1 },
];
const orderRows = [
  { qty: 4, sum: '100 грн.', height: 63 },
  { qty: 1, sum: '25 грн.', height: 62, active: true },
  { qty: 1, sum: '25 грн.', height: 62 },
  { qty: 1, sum: '25 грн.', height: 62 },
];

export default function App() {
  return (
    <Page>
      <GlobalStyle />
      <TopBar>
        <TopBarInner>
          <SocialIcons top={11} left={3} />
          <Discount $track={0.68}>Ваша персональная скидка - 5%</Discount>
          <Login $track={0.71}><UserIcon />Вход</Login>
          <Register $track={0.68}>Регистрация</Register>
          <Language $track={0.5}>Ru</Language>
        </TopBarInner>
      </TopBar>

      <Header>
        <HeaderInner>
          <Logo />
          <MessengerButtons lift={8} />
          <Phones>
            <PhoneLine><PhoneCode>+38 (044)</PhoneCode>750-50-11</PhoneLine>
            <PhoneLine><PhoneCode>+38 (097)</PhoneCode>775-50-51</PhoneLine>
          </Phones>
          <CallButton $track={0.08}>Заказать звонок</CallButton>
          <Hours>
            <HoursLine $track={0.82}>Ждем Вашего звонка</HoursLine>
            <HoursLine $track={0.55}>ежедневно с 9 до 18</HoursLine>
          </Hours>
          <CartButton><BagIcon /><CartBadge>0</CartBadge></CartButton>
        </HeaderInner>
      </Header>

      <Container>
        <MainNav>
          {navItems.map((n) => (
            <NavLink key={n.text} $track={n.track} $gap={n.gap} $active={n.active}>{n.text}</NavLink>
          ))}
        </MainNav>
        <Breadcrumbs>
          <Crumb $track={0.09}>Главная</Crumb>
          <ArrowIcon />
          <Crumb $track={0.5}>Корзина</Crumb>
          <ArrowIcon />
          <Crumb $track={0.55}>Оформление заказа</Crumb>
        </Breadcrumbs>

        <TitleRow>
          <PageTitle $track={0.38}>Оформление заказа</PageTitle>
          <Manager>
            <ManagerName $track={0.27}>Ваш личный менеджер Олег</ManagerName>
            <ManagerPhone $track={0.36}><PhoneIcon size={12} />+38 067 777 14 12</ManagerPhone>
          </Manager>
        </TitleRow>

        <TableHead>
          <HeadCell $track={0.29}>Товар<SortMark><Chevron color={lime} /></SortMark></HeadCell>
          <HeadCell $track={0.08}>Кол - во<SortMark><Chevron /></SortMark></HeadCell>
          <HeadCell $track={0.3}>Цена за товар<SortMark><Chevron /></SortMark></HeadCell>
          <HeadCell $track={0.19} $drop={1}>
            <StrayMark><Chevron w={9} /></StrayMark>
            Итоговая стоимость<SortMark><Chevron /></SortMark>
          </HeadCell>
        </TableHead>
        {orderRows.map((r, i) => (
          <Row key={i} $height={r.height} $active={r.active}>
            <Cell $track={0.5}>Орех соленый 80г.</Cell>
            <Quantity>
              <Step dir="l" />
              <QuantityBox $active={r.active}>{r.qty}</QuantityBox>
              <Step dir="r" color={r.active ? lime : grey} />
            </Quantity>
            <Cell $track={0.1}>25 грн.</Cell>
            <Cell $track={0.15} $center>{r.sum}</Cell>
          </Row>
        ))}
        <Total>
          <TotalLabel>Всего</TotalLabel>
          <TotalValue>175</TotalValue>
          <TotalUnit>грн.</TotalUnit>
        </Total>

        <Form>
          <StepTitle $track={0.85}>1. Контактные данные</StepTitle>
          <FieldStack $top={26}>
            <Field $track={0.6}>ФИО*</Field>
            <Field $track={0.5}>Email*</Field>
            <Field $track={0.33}>Телефон*</Field>
          </FieldStack>

          <StepTitle $top={51} $track={0.7}>2. Способ доставки</StepTitle>
          <Option $top={25} $track={0.41}><Radio $checked />Новая почта (по Украине, оплата за счет Клиента)</Option>
          <FieldStack $top={18}>
            <Field $track={0.4}>Страна<Chevron color={lime} w={12} /></Field>
            <Field $track={0.5} $active>Область<Chevron color={lime} w={12} /></Field>
          </FieldStack>
          <Option $top={14} $track={0.41}>
            <Radio />Курьер по Одессе
            <FreeTag>
              <svg width="96" height="31" viewBox="0 0 96 31">
                <path d="M5 0H96L87 13.5 96 27H5Q1 27.5 0 31V5Q0 0 5 0Z" fill="#e0853f" />
              </svg>
              <b>БЕСПЛАТНО</b>
            </FreeTag>
          </Option>
          <Option $top={14} $track={0.31}><Radio />Самовывоз со склада</Option>

          <StepTitle $top={50} $track={0.68}>3. Способ оплаты</StepTitle>
          <Option $top={25} $track={0.62}><Radio />Безналичный расчет</Option>
          <Option $top={14} $track={0.45}><Radio />LiqPay / Приват24</Option>
          <Option $top={13} $track={0.62}><Radio />Наличными при получении (Наложенным платежом)</Option>
          <Submit type="button">Продолжить</Submit>
        </Form>
      </Container>

      <Contacts>
        <ContactsInner>
          <div>
            <ContactsTitle>Контакты</ContactsTitle>
            <ContactRow $top={71}>
              <PhoneIcon size={14} />
              <ContactPhones>
                <div>+38 (095) 711 11 11</div>
                <div>+38 (095) 711 11 11</div>
              </ContactPhones>
              <MessengerButtons />
            </ContactRow>
            <ContactRow $top={42}>
              <MailIcon />
              <ContactLine $track={0.52}>nuts@nbsc.com.ua</ContactLine>
            </ContactRow>
            <PlaceHead $top={47}>
              <PlaceIcon><HomeIcon /></PlaceIcon>
              <PlaceTitle>Офис и отдел продаж</PlaceTitle>
            </PlaceHead>
            <Address>
              <AddressLine $track={0.36}>Украина, г. Одесса,</AddressLine>
              <AddressLine $track={0.28}>ул. Космонавтов, 32</AddressLine>
            </Address>
            <PlaceHead $top={37}>
              <PlaceIcon $lift={3}><TreeIcon /></PlaceIcon>
              <PlaceTitle>Производство</PlaceTitle>
            </PlaceHead>
            <Address>
              <AddressLine $track={0.5}>Украина, Одесская обл,</AddressLine>
              <AddressLine $track={0.31}>с. Яськи, ул. Центральная, 232</AddressLine>
            </Address>
          </div>
          <MapFrame><CityMap /></MapFrame>
        </ContactsInner>
      </Contacts>

      <footer>
        <FooterTop>
          <Logo />
          <FooterNav>
            {footerItems.map((n) => (
              <FooterLink key={n.text} $track={n.track} $gap={n.gap} $active={n.active} $drop={n.drop}>{n.text}</FooterLink>
            ))}
          </FooterNav>
        </FooterTop>
        <FooterBottom>
          <FooterBottomInner>
            <FinePrint $track={0.35}>Разработано <Studio><b>AVADA</b> MEDIA</Studio></FinePrint>
            <FinePrint $track={0.28}>Copyright © 2019. Все права защищены</FinePrint>
            <SocialIcons top={28} left={0} />
          </FooterBottomInner>
        </FooterBottom>
      </footer>
    </Page>
  );
}
